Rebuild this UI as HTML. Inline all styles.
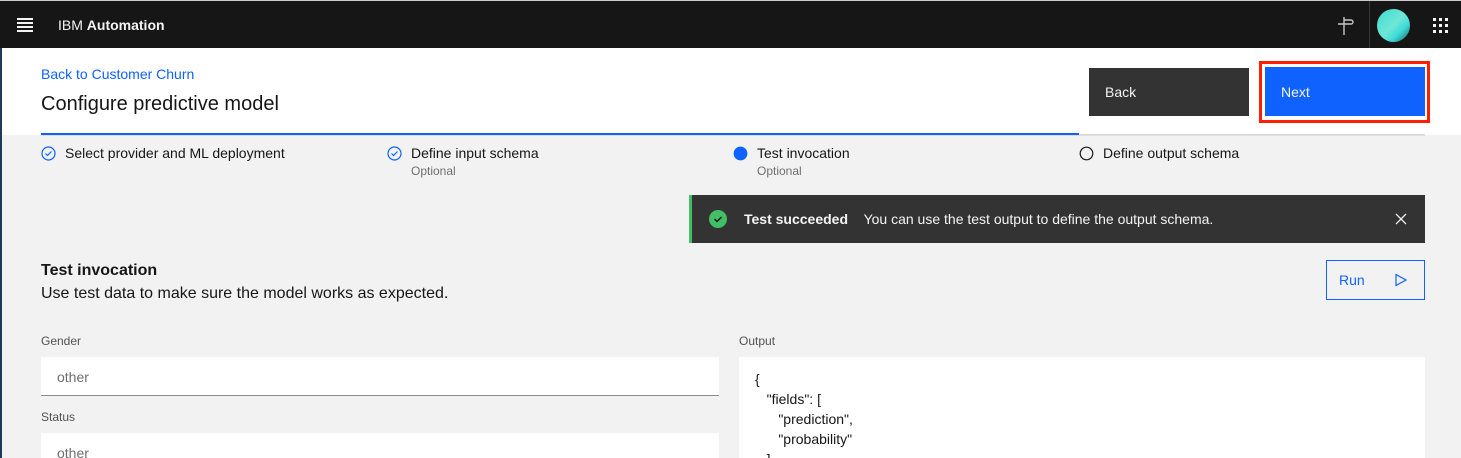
<!DOCTYPE html>
<html style="overflow:hidden;height:458px"><head><meta charset="utf-8"><style>
*{box-sizing:border-box;margin:0;padding:0}
body{width:1461px;height:458px;overflow:hidden;background:#f2f2f2;font-family:"Liberation Sans",sans-serif;color:#161616;position:relative}
.a{position:absolute}
.hdr{left:0;top:0;width:1461px;height:48px;background:#161616;border-top:1px solid #ccc}
.white{left:0;top:48px;width:1461px;height:87px;background:#fff}
.t{white-space:nowrap}
</style></head><body>
<div class="a hdr">
  <div class="a" style="left:17px;top:17px;width:16px;height:1.5px;background:#f4f4f4;box-shadow:0 4px 0 #f4f4f4,0 8px 0 #f4f4f4,0 12px 0 #f4f4f4"></div>
  <div class="a t" style="left:58px;top:16px;font-size:14px;color:#f4f4f4">IBM <b>Automation</b></div>
  <svg class="a" style="left:1335px;top:14px" width="20" height="22" viewBox="0 0 20 22"><path d="M9 2v18M9 5h7a2 2 0 0 1 0 4H9M9 9H3" fill="none" stroke="#c6c6c6" stroke-width="1.4"/></svg>
  <div class="a" style="left:1369px;top:0;width:1px;height:48px;background:#393939"></div>
  <div class="a" style="left:1377px;top:8px;width:33px;height:33px;border-radius:50%;background:linear-gradient(135deg,#3ddbd9 0%,#6fe8d4 50%,#3ddbd9 70%,#1f5c5a 100%)"></div>
  <svg class="a" style="left:1432px;top:16px" width="18" height="18"><g fill="#f4f4f4"><rect x="1" y="1" width="3" height="3"/><rect x="7" y="1" width="3" height="3"/><rect x="13" y="1" width="3" height="3"/><rect x="1" y="7" width="3" height="3"/><rect x="7" y="7" width="3" height="3"/><rect x="13" y="7" width="3" height="3"/><rect x="1" y="13" width="3" height="3"/><rect x="7" y="13" width="3" height="3"/><rect x="13" y="13" width="3" height="3"/></g></svg>
</div>
<div class="a white"></div>
<div class="a t" style="left:41px;top:66px;font-size:14px;color:#0f62fe">Back to Customer Churn</div>
<div class="a t" style="left:41px;top:93px;font-size:20px">Configure predictive model</div>
<div class="a" style="left:1089px;top:68px;width:160px;height:48px;background:#333"></div>
<div class="a t" style="left:1105px;top:84px;font-size:14px;color:#f4f4f4">Back</div>
<div class="a" style="left:1259px;top:61px;width:171px;height:62px;border:3px solid #ff1f00"></div>
<div class="a" style="left:1264px;top:66px;width:162px;height:51px;background:#0f62fe;border:1px solid #fff"></div>
<div class="a t" style="left:1281px;top:84px;font-size:14px;color:#f4f4f4">Next</div>
<div class="a" style="left:41px;top:134px;width:1384px;height:2px;background:#ddd"></div>
<div class="a" style="left:41px;top:133px;width:1038px;height:2px;background:#0f62fe"></div>
<svg class="a" style="left:41px;top:146px" width="15" height="15"><circle cx="7.5" cy="7.5" r="6.5" fill="none" stroke="#0f62fe" stroke-width="1.2"/><path d="M4.5 7.5l2 2 4-4" fill="none" stroke="#0f62fe" stroke-width="1.2"/></svg>
<div class="a t" style="left:65px;top:145px;font-size:14px">Select provider and ML deployment</div>
<svg class="a" style="left:387px;top:146px" width="15" height="15"><circle cx="7.5" cy="7.5" r="6.5" fill="none" stroke="#0f62fe" stroke-width="1.2"/><path d="M4.5 7.5l2 2 4-4" fill="none" stroke="#0f62fe" stroke-width="1.2"/></svg>
<div class="a t" style="left:411px;top:145px;font-size:14px">Define input schema</div>
<div class="a t" style="left:411px;top:164px;font-size:12px;color:#6f6f6f">Optional</div>
<svg class="a" style="left:733px;top:146px" width="15" height="15"><circle cx="7.5" cy="7.5" r="6.3" fill="#0f62fe" stroke="#0f62fe" stroke-width="1.2"/></svg>
<div class="a t" style="left:757px;top:145px;font-size:14px">Test invocation</div>
<div class="a t" style="left:757px;top:164px;font-size:12px;color:#6f6f6f">Optional</div>
<svg class="a" style="left:1079px;top:146px" width="15" height="15"><circle cx="7.5" cy="7.5" r="6.3" fill="none" stroke="#161616" stroke-width="1.2"/></svg>
<div class="a t" style="left:1103px;top:145px;font-size:14px">Define output schema</div>
<div class="a" style="left:689px;top:195px;width:736px;height:48px;background:#333;border-left:3px solid #42be65"></div>
<svg class="a" style="left:709px;top:210px" width="18" height="18"><circle cx="9" cy="9" r="9" fill="#42be65"/><path d="M5.5 9l2.5 2.5 4.5-4.5" fill="none" stroke="#161616" stroke-width="1.5"/></svg>
<div class="a t" style="left:744px;top:211px;font-size:14px;color:#f4f4f4"><b>Test succeeded</b>&nbsp;&nbsp;&nbsp;&nbsp;You can use the test output to define the output schema.</div>
<svg class="a" style="left:1395px;top:213px" width="12" height="12"><path d="M1 1l10 10M11 1L1 11" stroke="#f4f4f4" stroke-width="1.3"/></svg>
<div class="a t" style="left:41px;top:262px;font-size:16px;font-weight:bold">Test invocation</div>
<div class="a t" style="left:41px;top:285px;font-size:16px">Use test data to make sure the model works as expected.</div>
<div class="a" style="left:1326px;top:260px;width:99px;height:40px;border:1px solid #0f62fe"></div>
<div class="a t" style="left:1339px;top:272px;font-size:14px;color:#0f62fe">Run</div>
<svg class="a" style="left:1394px;top:273px" width="14" height="14"><path d="M2 1.5v11l10-5.5z" fill="none" stroke="#0f62fe" stroke-width="1.2"/></svg>
<div class="a t" style="left:41px;top:334px;font-size:12px;color:#525252">Gender</div>
<div class="a" style="left:41px;top:357px;width:678px;height:39px;background:#fff;border-bottom:1px solid #8d8d8d"></div>
<div class="a t" style="left:57px;top:369px;font-size:14px;color:#6f6f6f">other</div>
<div class="a t" style="left:41px;top:410px;font-size:12px;color:#525252">Status</div>
<div class="a" style="left:41px;top:433px;width:678px;height:25px;background:#fff"></div>
<div class="a t" style="left:57px;top:445px;font-size:14px;color:#6f6f6f">other</div>
<div class="a t" style="left:739px;top:334px;font-size:12px;color:#525252">Output</div>
<div class="a" style="left:739px;top:357px;width:686px;height:101px;background:#fff;overflow:hidden">
<pre style="position:absolute;left:16px;top:12px;font-family:'Liberation Sans',sans-serif;font-size:14px;line-height:20px;color:#161616">{
   "fields": [
      "prediction",
      "probability"
   ]</pre></div>
<div class="a" style="left:0;top:48px;width:2px;height:410px;background:#1d3a5a"></div>
</body></html>
